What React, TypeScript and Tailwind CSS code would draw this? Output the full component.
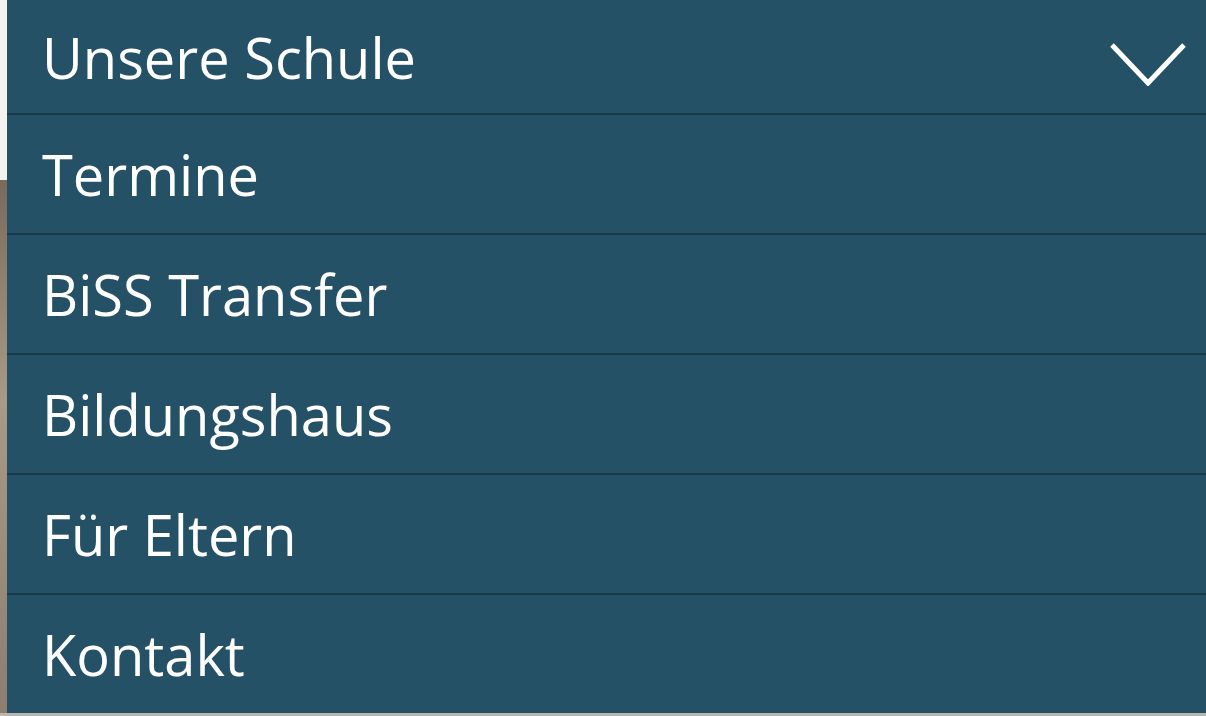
const ITEMS = ["Termine", "BiSS Transfer", "Bildungshaus", "Für Eltern", "Kontakt"];

const ROW =
  "flex items-center pl-[35px] text-[56px] leading-none text-white border-t-2 border-[#1c394a]";

export default function App() {
  return (
    <div
      className="flex h-[716px] w-full flex-col bg-[linear-gradient(to_bottom,#f4f2ef_0px,#f4f2ef_180px,#7a6a5c_180px,#a99a86_400px,#8c7e70_716px)]"
      style={{ fontFamily: '"Open Sans", sans-serif' }}
    >
      <nav className="ml-[7px] flex flex-col bg-[#255166]">
        <div className="flex h-[113px] items-center justify-between pl-[35px] pr-[18px] text-[56px] leading-none text-white">
          <span>Unsere Schule</span>
          <svg
            className="mt-[15px]"
            width="80"
            height="44"
            viewBox="0 0 80 44"
            fill="none"
            stroke="white"
            strokeWidth="5"
            aria-hidden="true"
          >
            <path d="M4 3 L40 41 L76 3" />
          </svg>
        </div>
        {ITEMS.map((item) => (
          <div key={item} className={`${ROW} h-[120px]`}>
            {item}
          </div>
        ))}
      </nav>
      <div className="h-[3px] bg-[#b9b6b0]" />
    </div>
  );
}
